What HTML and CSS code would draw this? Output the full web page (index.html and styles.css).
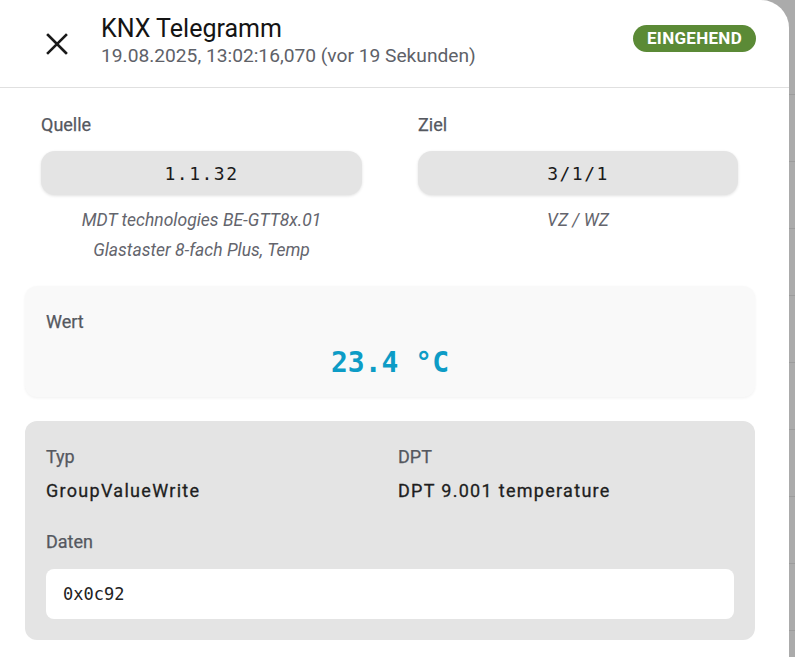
FILE: index.html
```html
<!DOCTYPE html>
<html lang="de">
<head>
<meta charset="utf-8">
<title>KNX Telegramm</title>
<link rel="stylesheet" href="styles.css">
</head>
<body>
<div class="page">
  <section class="dialog">
    <header class="dialog-header">
      <button class="close-btn" aria-label="Schließen">
        <svg width="24" height="24" viewBox="0 0 24 24"><path d="M3 3 L21 21 M21 3 L3 21" stroke="#1a1a1a" stroke-width="2.6" stroke-linecap="square" fill="none"/></svg>
      </button>
      <div class="titles">
        <h1 class="title">KNX Telegramm</h1>
        <div class="subtitle">19.08.2025, 13:02:16,070 (vor 19 Sekunden)</div>
      </div>
      <span class="badge">EINGEHEND</span>
    </header>
    <div class="dialog-body">
      <div class="addresses">
        <div class="addr">
          <div class="label">Quelle</div>
          <div class="addr-box">1.1.32</div>
          <div class="addr-desc">MDT technologies BE-GTT8x.01</div>
          <div class="addr-desc">Glastaster 8-fach Plus, Temp</div>
        </div>
        <div class="addr">
          <div class="label">Ziel</div>
          <div class="addr-box">3/1/1</div>
          <div class="addr-desc">VZ / WZ</div>
        </div>
      </div>
      <div class="value-card">
        <div class="label">Wert</div>
        <div class="value">23.4 °C</div>
      </div>
      <div class="details-card">
        <div class="details-grid">
          <div>
            <div class="label">Typ</div>
            <div class="detail-value">GroupValueWrite</div>
          </div>
          <div>
            <div class="label">DPT</div>
            <div class="detail-value">DPT 9.001 temperature</div>
          </div>
        </div>
        <div class="label">Daten</div>
        <div class="data-box">0x0c92</div>
      </div>
    </div>
  </section>
  <div class="scrim"></div>
</div>
</body>
</html>
```
FILE: styles.css
```css
* { box-sizing: border-box; }
html, body { margin: 0; padding: 0; }
body {
  background: #ababab;
  font-family: Roboto, "Noto Sans", sans-serif;
  width: 795px;
  height: 657px;
  overflow: hidden;
}
.page {
  display: flex;
  height: 657px;
}
.dialog {
  width: 789px;
  flex: none;
  background: #ffffff;
  border-top-right-radius: 28px;
  overflow: hidden;
}
.scrim {
  flex: 1;
  background: repeating-linear-gradient(to bottom, #ababab 0, #ababab 66px, #9c9c9c 66px, #9c9c9c 67px);
  background-position: 0 28px;
}
.dialog-header {
  display: flex;
  align-items: center;
  height: 88px;
  border-bottom: 1px solid #e0e0e0;
  padding: 0 33px 0 45px;
}
.close-btn {
  border: 0;
  background: none;
  padding: 0;
  width: 24px;
  height: 24px;
  margin-right: 32px;
  display: flex;
}
.titles { flex: 1; padding-bottom: 4px; }
.title {
  margin: 0;
  font-size: 25px;
  font-weight: 400;
  color: #141414;
  line-height: 28px;
}
.subtitle {
  font-size: 19.2px;
  color: #5e6168;
  line-height: 26px;
}
.badge {
  align-self: flex-start;
  margin-top: 25px;
  background: #5b8a36;
  color: #ffffff;
  font-weight: 700;
  font-size: 17px;
  letter-spacing: 0.3px;
  line-height: 27px;
  height: 27px;
  padding: 0 14px;
  border-radius: 14px;
}
.dialog-body {
  padding: 27px 34px 0 25px;
}
.addresses {
  display: grid;
  grid-template-columns: 321px 320px;
  column-gap: 56px;
  padding: 0 16px;
}
.label {
  font-size: 18px;
  font-weight: 400;
  color: #55585f;
  line-height: 20px;
  -webkit-text-stroke: 0.25px #55585f;
}
.addr .label { margin-bottom: 16px; }
.addr-box {
  height: 44px;
  background: #e4e4e4;
  border-radius: 14px;
  box-shadow: 0 1px 3px rgba(0,0,0,0.12);
  font-family: "DejaVu Sans Mono", "Liberation Mono", monospace;
  font-size: 18px;
  color: #1a1a1a;
  display: flex;
  align-items: center;
  justify-content: center;
  letter-spacing: 1.5px;
  margin-bottom: 10px;
}
.addr-desc {
  text-align: center;
  font-style: italic;
  font-size: 17.5px;
  color: #64656d;
  line-height: 30px;
}
.value-card {
  margin-top: 21px;
  background: #f9f9f9;
  border-radius: 12px;
  box-shadow: 0 1px 3px rgba(0,0,0,0.06);
  height: 111px;
  padding: 26px 21px 0;
}
.value {
  text-align: center;
  font-family: "DejaVu Sans Mono", "Liberation Mono", monospace;
  font-weight: 700;
  font-size: 28px;
  color: #0d9cc6;
  line-height: 34px;
  margin-top: 14px;
}
.details-card {
  margin-top: 24px;
  background: #e4e4e4;
  border-radius: 12px;
  height: 219px;
  padding: 26px 21px 0;
}
.details-grid {
  display: grid;
  grid-template-columns: 352px 1fr;
  margin-bottom: 31px;
}
.detail-value {
  font-size: 18px;
  font-weight: 400;
  color: #1e1e1e;
  margin-top: 14px;
  line-height: 20px;
  letter-spacing: 1.3px;
  -webkit-text-stroke: 0.3px #1e1e1e;
}
.details-card > .label { margin-bottom: 17px; }
.data-box {
  background: #ffffff;
  border-radius: 8px;
  height: 50px;
  display: flex;
  align-items: center;
  padding-left: 17px;
  font-family: "DejaVu Sans Mono", "Liberation Mono", monospace;
  font-size: 17px;
  color: #222;
}
```
